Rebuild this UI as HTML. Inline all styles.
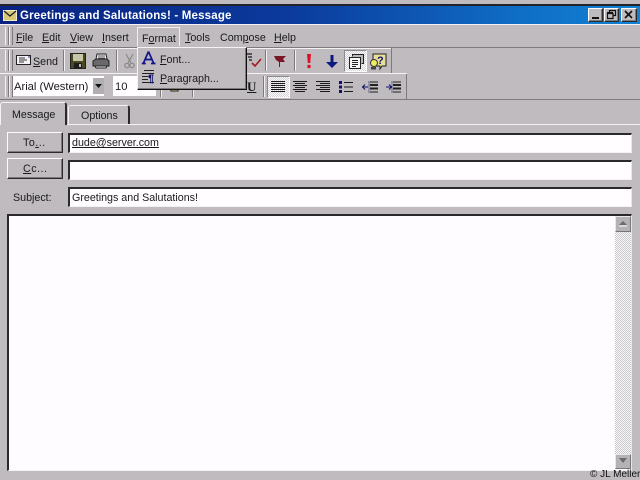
<!DOCTYPE html>
<html><head><meta charset="utf-8"><style>
html,body{margin:0;padding:0;background:#bfbbbf;}
#r{position:relative;width:640px;height:480px;overflow:hidden;background:#bfbbbf;font-family:"Liberation Sans",sans-serif;font-size:10.7px;color:#1a1a1a;filter:blur(.3px);}
#r div,#r svg{position:absolute;}
.t{white-space:nowrap;line-height:14px;}
u{text-decoration:underline;}
.vsep{width:1px;background:#7d7a7d;box-shadow:1px 0 0 #f2f0f2;}
.grip{width:2px;background:#bfbbbf;border-left:1px solid #f2f0f2;border-right:1px solid #7d7a7d;}
.btn{background:#bfbbbf;border-top:1px solid #fdfbfd;border-left:1px solid #fdfbfd;border-right:1px solid #2a2a2a;border-bottom:1px solid #2a2a2a;box-shadow:inset -1px -1px 0 #7d7a7d;box-sizing:border-box;}
.sb{background:#b4b2b4;border-top:1px solid #e8e6e8;border-left:1px solid #e8e6e8;border-right:1px solid #777;border-bottom:1px solid #777;box-sizing:border-box;}
.inp{background:#fffdff;border-top:2px solid #2a2a2a;border-left:2px solid #2a2a2a;border-right:1px solid #e8e6e8;border-bottom:1px solid #f4f2f4;box-sizing:border-box;}
.press{background-color:#e6e4e6;background-image:repeating-conic-gradient(#d4d2d4 0 25%,#fbfafb 0 50%);background-size:2px 2px;border-top:1px solid #8d8a8d;border-left:1px solid #8d8a8d;border-right:1px solid #fbfafb;border-bottom:1px solid #fbfafb;box-sizing:border-box;}
</style></head><body><div id="r">
<!-- title bar -->
<div style="left:0;top:4px;width:640px;height:2px;background:#23232b"></div>
<div style="left:0;top:6px;width:640px;height:18px;background:linear-gradient(90deg,#0a2382 0,#0b3a9c 45%,#0f6cc4 80%,#1183d4 100%)"></div>
<div style="left:0;top:24px;width:640px;height:1px;background:#f4f2f4"></div>
<svg style="left:3px;top:10px" width="14" height="11"><rect x="0.5" y="0.5" width="13" height="10" fill="#d8c878" stroke="#f0ecd0"/><path d="M1 1l6 5 6-5" fill="none" stroke="#222" stroke-width="1.3"/></svg>
<div class="t" style="left:20px;top:9px;color:#fff;font-weight:bold;font-size:11.5px;letter-spacing:.18px">Greetings and Salutations! - Message</div>
<div class="btn" style="left:588px;top:8px;width:15px;height:14px"></div>
<div style="left:592px;top:17px;width:7px;height:2px;background:#111"></div>
<div class="btn" style="left:604px;top:8px;width:15px;height:14px"></div>
<svg style="left:606px;top:9px" width="11" height="11"><path d="M3.5 3V1.500h6v5H7.500M1.500 4.500h5.500v5h-5.500zM1 3.500h6" fill="none" stroke="#111" stroke-width="1.200"/></svg>
<div class="btn" style="left:621px;top:8px;width:16px;height:14px"></div>
<svg style="left:624px;top:10px" width="10" height="10"><path d="M1 1l7 7M8 1l-7 7" stroke="#111" stroke-width="1.700"/></svg>

<!-- menu bar -->
<div style="left:0;top:47px;width:640px;height:1px;background:#7d7a7d"></div>
<div class="grip" style="left:5px;top:27px;height:18px"></div>
<div class="grip" style="left:9px;top:27px;height:18px"></div>
<div class="t" style="left:16px;top:31px"><u>F</u>ile</div>
<div class="t" style="left:42px;top:31px"><u>E</u>dit</div>
<div class="t" style="left:70px;top:31px"><u>V</u>iew</div>
<div class="t" style="left:102px;top:31px"><u>I</u>nsert</div>
<div style="left:137px;top:27px;width:43px;height:19px;box-sizing:border-box;border:1px solid #f0eef0;border-bottom:0"></div>
<div class="t" style="left:142px;top:32px">F<u>o</u>rmat</div>
<div class="t" style="left:185px;top:31px"><u>T</u>ools</div>
<div class="t" style="left:220px;top:31px">Com<u>p</u>ose</div>
<div class="t" style="left:274px;top:31px"><u>H</u>elp</div>

<!-- toolbar 1 -->
<div style="left:0;top:48px;width:392px;height:1px;background:#f4f2f4"></div>
<div style="left:0;top:73px;width:392px;height:1px;background:#7d7a7d"></div>
<div style="left:391px;top:48px;width:1px;height:25px;background:#7d7a7d"></div>
<div class="grip" style="left:5px;top:50px;height:21px"></div>
<div class="grip" style="left:9px;top:50px;height:21px"></div>
<svg style="left:16px;top:54px" width="16" height="12"><rect x=".5" y="1.500" width="14" height="9" fill="#f4f2f4" stroke="#222"/><path d="M3 4h6M3 6h8M3 8h5" stroke="#333"/><path d="M12 3h2" stroke="#22a"/></svg>
<div class="t" style="left:33px;top:55px"><u>S</u>end</div>
<div class="vsep" style="left:63px;top:50px;height:21px"></div>
<svg style="left:70px;top:53px" width="16" height="16"><path d="M.5.500h15v15H.500z" fill="#4a4a20" stroke="#222"/><rect x="3" y="1" width="10" height="7" fill="#c8c6a8"/><rect x="4" y="10" width="8" height="5" fill="#1c1c1c"/><rect x="9" y="11" width="2" height="3" fill="#bbb"/></svg>
<svg style="left:92px;top:53px" width="18" height="16"><path d="M5 1h9l1 5H4z" fill="#f4f2f4" stroke="#222"/><path d="M1 8l3-2h11l2 2v5H1z" fill="#6a686a" stroke="#222"/><path d="M3 13h12l-1 2H4z" fill="#eee" stroke="#222"/><path d="M6 3h7M6 5h7" stroke="#555"/></svg>
<div class="vsep" style="left:116px;top:50px;height:21px"></div>
<svg style="left:124px;top:53px" width="11" height="16"><path d="M2 1l5 9M9 1L4 10" stroke="#8a888a" stroke-width="1.200" fill="none"/><circle cx="3" cy="12.500" r="2.200" fill="none" stroke="#8a888a" stroke-width="1.200"/><circle cx="8" cy="12.500" r="2.200" fill="none" stroke="#8a888a" stroke-width="1.200"/></svg>
<svg style="left:246px;top:52px" width="16" height="16"><path d="M1 2h5M2 5h4M3 8h3" stroke="#333" stroke-width="1.500"/><path d="M6 11l3 3 6-7" fill="none" stroke="#a01820" stroke-width="1.600"/></svg>
<div class="vsep" style="left:265px;top:50px;height:21px"></div>
<svg style="left:273px;top:54px" width="14" height="16"><path d="M1 2h12l-3 3 2 3H7v5H6V8L3 6z" fill="#7a1528"/></svg>
<div class="vsep" style="left:294px;top:50px;height:21px"></div>
<svg style="left:305px;top:53px" width="8" height="16"><path d="M2 1h4l-.800 9H2.800z" fill="#e0102a"/><circle cx="4" cy="13.500" r="1.800" fill="#e0102a"/></svg>
<svg style="left:325px;top:54px" width="14" height="15"><path d="M5.500 1h3v7H13l-6 6-6-6h4.500z" fill="#0c1a80"/></svg>
<div class="press" style="left:344px;top:50px;width:23px;height:22px"></div>
<svg style="left:349px;top:54px" width="16" height="16"><path d="M3.500 2.500V.5h11v9h-2" fill="#bbb" stroke="#222"/><rect x=".5" y="3.500" width="11" height="11" fill="#f6f6f6" stroke="#222"/><path d="M3 6.500h6M3 8.500h6M3 10.500h6M3 12.500h4" stroke="#222"/></svg>
<svg style="left:369px;top:53px" width="18" height="18"><path d="M4 1h13v12h-4l-2 3v-3H4z" fill="#e8e098" stroke="#222"/><circle cx="5" cy="10" r="3.500" fill="#f0ec60" stroke="#333"/><rect x="2" y="14" width="5" height="2.500" fill="#444"/><text x="8" y="11" font-family="Liberation Sans" font-size="11" font-weight="bold" fill="#101070">?</text></svg>

<!-- toolbar 2 -->
<div style="left:0;top:73px;width:407px;height:1px;background:#f4f2f4"></div>
<div style="left:0;top:99px;width:640px;height:1px;background:#7d7a7d"></div>
<div style="left:406px;top:74px;width:1px;height:25px;background:#7d7a7d"></div>
<div class="grip" style="left:5px;top:76px;height:21px"></div>
<div class="grip" style="left:9px;top:76px;height:21px"></div>
<div style="left:13px;top:76px;width:91px;height:20px;background:#fffdff"></div>
<div class="t" style="left:14px;top:80px;font-size:11.2px">Arial (Western)</div>
<div style="left:93px;top:78px;width:11px;height:16px;background:#b0aeb0"></div>
<svg style="left:95px;top:84px" width="8" height="5"><path d="M0 0h7L3.500 4z" fill="#111"/></svg>
<div style="left:113px;top:76px;width:43px;height:20px;background:#fffdff"></div>
<div class="t" style="left:115px;top:80px;font-size:11.2px">10</div>
<div class="vsep" style="left:160px;top:76px;height:21px"></div>
<svg style="left:168px;top:86px" width="14" height="8"><path d="M2 0h9l-1 5H3z" fill="#e0d860" stroke="#222"/></svg>
<div class="t" style="left:247px;top:80px;font-family:'Liberation Serif',serif;font-weight:bold;font-size:13px"><u>U</u></div>
<div class="vsep" style="left:263px;top:76px;height:21px"></div>
<div class="press" style="left:267px;top:76px;width:23px;height:22px"></div>
<svg style="left:271px;top:80px" width="132" height="14" fill="none" stroke="#1a1a1a">
<path d="M0 1.500h14M0 3.500h14M0 5.500h14M0 7.500h14M0 9.500h14M0 11.500h14"/>
<path d="M22 1.500h14M24 3.500h10M22 5.500h14M24 7.500h10M22 9.500h14M24 11.500h10"/>
<path d="M45 1.500h14M49 3.500h10M45 5.500h14M49 7.500h10M45 9.500h14M49 11.500h10"/>
<path d="M73 2.500h9M73 7h9M73 11.500h9"/>
<path d="M68 1h3v3h-3zM68 5.500h3v3h-3zM68 10h3v3h-3z" fill="#10106a" stroke="none"/>
<path d="M98 1.500v11" stroke="#10106a" stroke-dasharray="1 1"/>
<path d="M99 2h8M99 12h8" stroke="#222"/>
<path d="M99 4h8v2h-8zM99 7.500h8v2h-8z" fill="#222" stroke="none"/>
<path d="M92 7h5M94 4.500L91.500 7 94 9.500" stroke="#10106a"/>
<path d="M121 1.500v11" stroke="#10106a" stroke-dasharray="1 1"/>
<path d="M122 2h8M122 12h8" stroke="#222"/>
<path d="M122 4h8v2h-8zM122 7.500h8v2h-8z" fill="#222" stroke="none"/>
<path d="M115 7h5M118 4.500L120.500 7 118 9.500" stroke="#10106a"/>
</svg>
<div class="vsep" style="left:192px;top:76px;height:21px"></div>
<div style="left:198px;top:87px;width:8px;height:3px;background:#222"></div>
<div style="left:222px;top:87px;width:6px;height:3px;background:#222"></div>

<!-- dropdown menu -->
<div style="left:137px;top:47px;width:110px;height:43px;box-sizing:border-box;background:#bfbbbf;border-top:1px solid #f4f2f4;border-left:1px solid #f4f2f4;border-right:1px solid #111;border-bottom:1px solid #111;box-shadow:inset -1px -1px 0 #7d7a7d"></div>
<svg style="left:141px;top:51px" width="15" height="14"><path d="M7.500.5L2.500 12M7.500.5L12.500 12M4.300 8.500h6.400M.8 12.500h4M10 12.500h4.500" fill="none" stroke="#14148a" stroke-width="1.700"/></svg>
<div class="t" style="left:160px;top:53px"><u>F</u>ont...</div>
<svg style="left:141px;top:70px" width="16" height="15"><path d="M3 .5h10M1 3.500h12M1 6.500h6M1 9.500h6M1 12.500h12" stroke="#222"/><text x="7" y="12" font-family="Liberation Sans" font-size="11" font-weight="bold" fill="#10106a">¶</text></svg>
<div class="t" style="left:160px;top:72px"><u>P</u>aragraph...</div>

<!-- tabs -->
<div style="left:0;top:124px;width:640px;height:1px;background:#f4f2f4"></div>
<div style="left:68px;top:105px;width:62px;height:19px;box-sizing:border-box;border-top:1px solid #f4f2f4;border-left:1px solid #f4f2f4;border-right:2px solid #2a2a2a;border-radius:3px 3px 0 0"></div>
<div class="t" style="left:81px;top:109px">Options</div>
<div style="left:0;top:102px;width:67px;height:23px;background:#bfbbbf;box-sizing:border-box;border-top:1px solid #f4f2f4;border-left:1px solid #f4f2f4;border-right:2px solid #2a2a2a;border-radius:3px 3px 0 0"></div>
<div class="t" style="left:12px;top:108px">Message</div>

<!-- header fields -->
<div class="btn" style="left:7px;top:132px;width:56px;height:21px"></div>
<div class="t" style="left:23px;top:136px;letter-spacing:.5px">To<u>.</u>..</div>
<div class="btn" style="left:7px;top:158px;width:56px;height:21px"></div>
<div class="t" style="left:23px;top:162px;letter-spacing:.5px"><u>C</u>c...</div>
<div class="t" style="left:13px;top:191px">Subject:</div>
<div class="inp" style="left:68px;top:133px;width:564px;height:20px"></div>
<div class="t" style="left:72px;top:136px"><u>dude@server.com</u></div>
<div class="inp" style="left:68px;top:160px;width:564px;height:20px"></div>
<div class="inp" style="left:68px;top:187px;width:564px;height:20px"></div>
<div class="t" style="left:72px;top:191px">Greetings and Salutations!</div>

<!-- body -->
<div style="left:7px;top:214px;width:625px;height:257px;box-sizing:border-box;background:#fffcff;border-top:2px solid #2a2a2a;border-left:2px solid #2a2a2a;border-right:1px solid #e8e6e8;border-bottom:1px solid #f4f2f4"></div>
<div style="left:615px;top:232px;width:16px;height:222px;background-color:#e6e4e6;background-image:repeating-conic-gradient(#c8c6c8 0 25%,#fbfafb 0 50%);background-size:2px 2px"></div>
<div class="sb" style="left:615px;top:216px;width:16px;height:16px"></div>
<svg style="left:619px;top:221px" width="9" height="6"><path d="M4 0l4 4H0z" fill="#6d6a6d"/><path d="M0 5h8" stroke="#fbfafb"/></svg>
<div class="sb" style="left:615px;top:454px;width:16px;height:15px"></div>
<svg style="left:619px;top:458px" width="9" height="6"><path d="M0 0h8L4 5z" fill="#6d6a6d"/></svg>

<!-- watermark -->
<div class="t" style="left:590px;top:469px;font-size:10px;line-height:12px;color:#111">© JL Meller</div>
</div></body></html>
